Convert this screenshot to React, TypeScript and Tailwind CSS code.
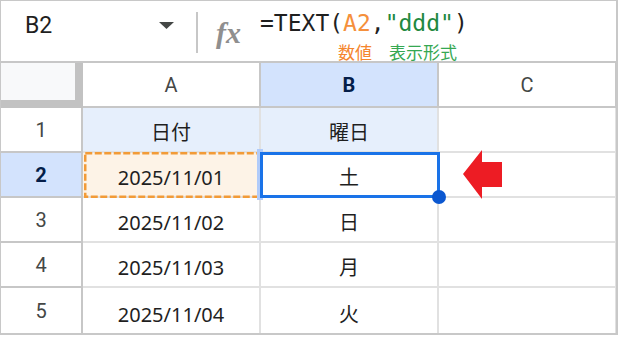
const cellFont = "font-['Noto_Sans','Noto_Sans_CJK_JP',sans-serif] text-[20px] leading-[20px] text-[#1f1f1f]";
const headFont = "font-['Roboto','Liberation_Sans',sans-serif] text-[20px] leading-[20px]";

const rows = [
  { n: 1, a: "日付", b: "曜日" },
  { n: 2, a: "2025/11/01", b: "土" },
  { n: 3, a: "2025/11/02", b: "日" },
  { n: 4, a: "2025/11/03", b: "月" },
  { n: 5, a: "2025/11/04", b: "火" },
];

function FormulaBar() {
  return (
    <div className="h-[62px] shrink-0 border-b-2 border-[#c7c7c7] flex items-start">
      <div className="w-[195px] h-full flex items-start pl-[24px] pr-[22px]">
        <span className="pt-[13px] font-['Roboto','Liberation_Sans',sans-serif] text-[23px] leading-[23px] text-[#1f1f1f]">
          B2
        </span>
        <svg className="ml-auto mt-[21px]" width="15" height="7" viewBox="0 0 15 7">
          <polygon points="0,0 15,0 7.5,7" fill="#444746" />
        </svg>
      </div>
      <div className="w-[2px] h-[41px] mt-[11px] bg-[#c7c7c7]" />
      <span className="ml-[18px] mt-[17px] font-['Liberation_Serif',serif] italic font-bold text-[30px] leading-[30px] text-[#8f8f8f]">
        fx
      </span>
      <div className="ml-[19px] pt-[11px] flex flex-col">
        <div className="font-['DejaVu_Sans_Mono',monospace] text-[23px] leading-[23px] text-[#1f1f1f] whitespace-pre">
          =TEXT(<span className="text-[#f5903c]">A2</span>,<span className="text-[#22893f]">"ddd"</span>)
        </div>
        <div className="mt-[8px] pl-[78px] flex font-['Noto_Sans_CJK_JP',sans-serif] text-[17px] leading-[17px]">
          <span className="text-[#f5862e]">数値</span>
          <span className="ml-[17px] text-[#35a852]">表示形式</span>
        </div>
      </div>
    </div>
  );
}

function HeaderRow() {
  return (
    <div className="h-[45px] shrink-0 flex">
      <div className="w-[82px] h-full bg-[#f8f9fa] border-r-8 border-b-8 border-[#c2c2c2]" />
      <div className={`w-[178px] h-full flex items-center justify-center border-r-2 border-b-2 border-[#c7c7c7] text-[#444746] ${headFont}`}>
        A
      </div>
      <div className={`w-[178px] h-full flex items-center justify-center border-r-2 border-b-2 border-[#c7c7c7] bg-[#d3e3fd] font-bold text-[#041e49] ${headFont}`}>
        B
      </div>
      <div className={`w-[177px] h-full flex items-center justify-center border-r border-b-2 border-[#c7c7c7] text-[#444746] ${headFont}`}>
        C
      </div>
    </div>
  );
}

function Row({ n, a, b }: { n: number; a: string; b: string }) {
  const last = n === 5;
  const bb = last ? "" : "border-b-2";
  const active = n === 2;
  const head = n === 1;
  return (
    <div className="h-[45px] shrink-0 flex">
      <div
        className={`w-[82px] h-full flex items-center justify-center border-r-2 ${bb} border-[#c7c7c7] ${headFont} ${
          active ? "bg-[#d3e3fd] font-bold text-[#041e49]" : "text-[#444746]"
        }`}
      >
        {n}
      </div>
      <div
        className={`relative w-[178px] h-full flex items-end justify-center pb-[8px] border-r-2 ${bb} border-[#e1e1e1] ${cellFont} ${
          head ? "bg-[#e6effc]" : active ? "bg-[#fdf3e7]" : ""
        }`}
      >
        {a}
        {active && (
          <svg className="absolute z-10 left-[1px] top-[-1px]" width="177" height="46">
            <rect x="1.25" y="1.25" width="174.5" height="43.5" fill="none" stroke="#f29b38" strokeWidth="2.5" strokeDasharray="7 2.5" />
          </svg>
        )}
      </div>
      <div
        className={`relative w-[178px] h-full flex items-end justify-center pb-[8px] border-r-2 ${bb} border-[#e1e1e1] ${cellFont} ${
          head ? "bg-[#e6effc]" : ""
        }`}
      >
        {b}
        {active && (
          <>
            <div className="absolute z-20 left-[-4px] top-[-4px] w-[6px] h-[51px] bg-[#b0cbfa]" />
            <div className="absolute z-20 left-[-1px] top-[-1px] w-[180px] h-[46px] border-[3px] border-[#1a73e8]" />
            <div className="absolute z-30 left-[171px] top-[37px] w-[14px] h-[14px] rounded-full bg-[#0b57d0]" />
          </>
        )}
      </div>
      <div className={`w-[177px] h-full border-r ${bb} border-[#e1e1e1]`} />
    </div>
  );
}

export default function App() {
  return (
    <div className="relative w-[619px] h-[337px] bg-white overflow-hidden">
      <div className="w-[618px] h-[335px] flex flex-col border-l border-t border-r-2 border-b-2 border-[#c8c8c8]">
        <FormulaBar />
        <HeaderRow />
        {rows.map((r) => (
          <Row key={r.n} {...r} />
        ))}
      </div>
      <svg className="absolute left-[462px] top-[149px]" width="42" height="52" viewBox="0 0 42 52">
        <polygon points="1,25 20,1 20,13 40,13 40,38 20,38 20,50" fill="#ed1c24" />
      </svg>
    </div>
  );
}
